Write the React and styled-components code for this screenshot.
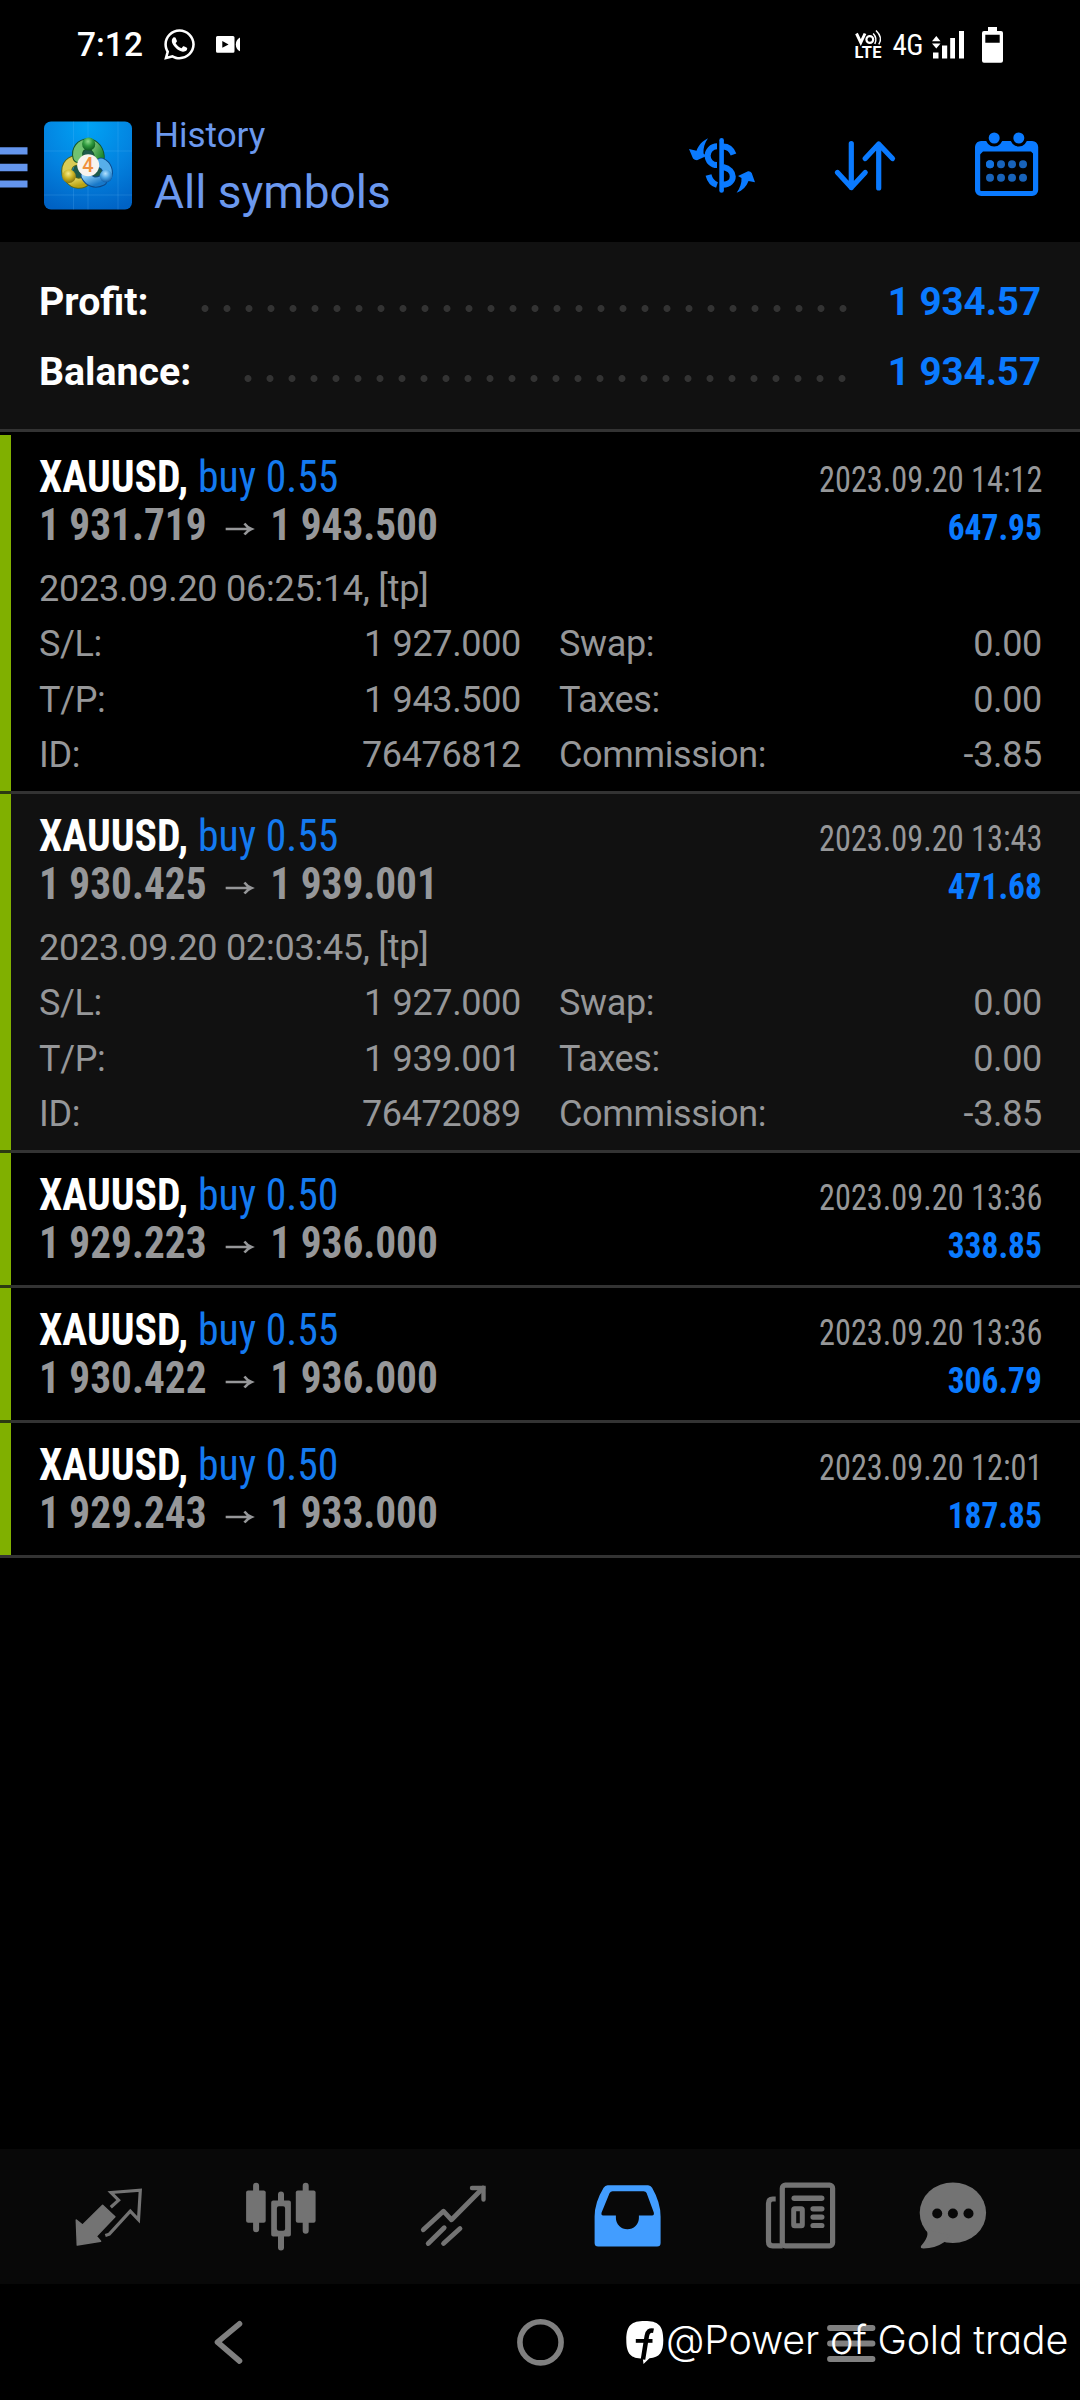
import React from "react";
import styled, { createGlobalStyle } from "styled-components";
import { FaWhatsapp } from "react-icons/fa";

const color = {
  blue: "#0a7aff",
  blueText: "#147af0",
  title: "#6b98ee",
  grey: "#969799",
  tab: "#737373",
  nav: "#808080",
  line: "#333333",
  green: "#80b000",
};

const GlobalStyle = createGlobalStyle`
  * { box-sizing: border-box; }
  body {
    margin: 0;
    background: #000;
    font-family: Roboto, "Liberation Sans", sans-serif;
  }
  svg { display: block; flex: none; overflow: visible; }
`;

const Screen = styled.div`
  display: flex;
  flex-direction: column;
  width: 1080px;
  height: 2400px;
  overflow: hidden;
  background: #000;
  white-space: nowrap;
`;

/* ---------- status bar ---------- */

const StatusBar = styled.header`
  display: flex;
  justify-content: space-between;
  align-items: center;
  height: 87px;
  padding: 2px 77px 0 77px;
  color: #fff;
`;

const StatusGroup = styled.div`
  display: flex;
  align-items: center;
  gap: ${(p) => p.$gap}px;
`;

const Clock = styled.span`
  font-size: 33.5px;
  font-weight: 500;
  line-height: 40px;
`;

const Network = styled.span`
  width: 28px;
  font-family: "Roboto Condensed", Roboto, sans-serif;
  font-size: 29px;
  font-weight: 400;
  line-height: 34px;
  letter-spacing: -0.600px;
`;

const WhatsAppMark = styled(FaWhatsapp)`
  width: 31px;
  height: 35px;
`;

const CameraIcon = () => (
  <svg viewBox="216 34 25 21" width="25" height="21">
    <path fill="#fff" fillRule="evenodd" d="M217.500 36H233Q234.500 36 234.500 37.500V51.200Q234.500 52.700 233 52.700H217.500Q216 52.700 216 51.200V37.500Q216 36 217.500 36ZM222.300 41V47.800L228.600 44.400Z" />
    <path fill="#fff" d="M240 37.600V51.300Q236 49.500 235.800 44.400Q236 39.500 240 37.600Z" />
  </svg>
);

const VolteText = styled.text`
  fill: #fff;
  font-family: Roboto, sans-serif;
  font-weight: 700;
`;

const VolteIcon = () => (
  <svg viewBox="855 29 26 29" width="26" height="29">
    <path d="M856.500 32.500L860.800 41.500L865 32.500" fill="none" stroke="#fff" strokeWidth="2.900" />
    <circle cx="869.800" cy="38.500" r="3.400" fill="none" stroke="#fff" strokeWidth="2.200" />
    <path d="M873.200 32.600Q877.600 37.500 874.800 43M876 29.500Q883.200 36.500 878.800 43.400" fill="none" stroke="#fff" strokeWidth="1.500" />
    <VolteText x="854.500" y="57.300" fontSize="16.400" textLength="27">LTE</VolteText>
  </svg>
);

const SignalIcon = () => (
  <svg viewBox="932 29 32 29" width="32" height="29">
    <path fill="#fff" d="M932 40.300L936.300 35L940.500 40.300ZM932 42.500L936.300 47.500L940.500 42.500ZM933 51.500H938.500V57.500H933ZM942 44.500H947.200V57.500H942ZM950.200 37H955V57.500H950.200ZM959 30H964V57.500H959Z" />
  </svg>
);

const BatteryIcon = () => (
  <svg viewBox="982 26 21 36" width="21" height="36">
    <path fill="#fff" fillRule="evenodd" d="M988 26H997V30H1001Q1003 30 1003 32V59.700Q1003 61.700 1001 61.700H984Q982 61.700 982 59.700V32Q982 30 984 30H988ZM985.300 33.700V41.700H999.700V33.700Z" />
  </svg>
);

/* ---------- app header ---------- */

const Header = styled.div`
  display: flex;
  align-items: center;
  height: 155px;
  padding-right: 42px;
`;

const MenuButton = styled.div`
  width: 44px;
`;

const Titles = styled.div`
  display: flex;
  flex-direction: column;
  flex: 1;
  margin: 8px 0 0 22px;
  color: ${color.title};
`;

const Section = styled.span`
  font-size: 35px;
  line-height: 46px;
`;

const Filter = styled.span`
  font-size: 46px;
  line-height: 66px;
`;

const Actions = styled.div`
  display: flex;
  align-items: center;
  gap: 81px;
`;

const MenuIcon = () => (
  <svg viewBox="0 140.500 28 48" width="28" height="48">
    <path fill="#6495ed" d="M0 146.700H27.500V154H0ZM0 163.300H27.500V170.700H0ZM0 180H27.500V187H0Z" />
  </svg>
);

const LogoText = styled.text`
  fill: #f0913c;
  font-family: Roboto, sans-serif;
  font-weight: 500;
`;

const AppLogo = () => (
  <svg viewBox="44 119.500 88 90" width="88" height="90">
    <defs>
      <radialGradient id="sky" cx="0.5" cy="0.05" r="1">
        <stop offset="0" stopColor="#00a3f5" />
        <stop offset="0.55" stopColor="#0382df" />
        <stop offset="1" stopColor="#0062c4" />
      </radialGradient>
      <linearGradient id="leaf" x1="0" y1="0" x2="1" y2="1">
        <stop offset="0" stopColor="#8fcf8a" />
        <stop offset="1" stopColor="#1d8a2e" />
      </linearGradient>
      <linearGradient id="gold" x1="0" y1="0" x2="1" y2="1">
        <stop offset="0" stopColor="#ecdf6a" />
        <stop offset="1" stopColor="#b9a213" />
      </linearGradient>
      <linearGradient id="ice" x1="0" y1="0" x2="1" y2="1">
        <stop offset="0" stopColor="#8fd0f7" />
        <stop offset="1" stopColor="#1878c9" />
      </linearGradient>
      <radialGradient id="ballGreen" cx="0.45" cy="0.3" r="0.7">
        <stop offset="0" stopColor="#8fdc8c" />
        <stop offset="0.5" stopColor="#2f9a3e" />
        <stop offset="1" stopColor="#0d5a1e" />
      </radialGradient>
      <radialGradient id="ballGold" cx="0.45" cy="0.3" r="0.7">
        <stop offset="0" stopColor="#f6ec8a" />
        <stop offset="0.5" stopColor="#cbb526" />
        <stop offset="1" stopColor="#83720b" />
      </radialGradient>
      <radialGradient id="ballBlue" cx="0.45" cy="0.3" r="0.7">
        <stop offset="0" stopColor="#b4e2ff" />
        <stop offset="0.5" stopColor="#4aa3e2" />
        <stop offset="1" stopColor="#0d5dab" />
      </radialGradient>
    </defs>
    <rect x="44" y="121" width="88" height="88" rx="7" fill="url(#sky)" />
    <path d="M73.500 121V209M88 121V209M118 121V209M44 150.500H132M44 194.500H132" stroke="#7cc9ff" strokeOpacity="0.18" strokeWidth="1" />
    <path d="M70 178L79 153L88 144L99 154L107 178L96 184L88 178L80 184Z" fill="#1d5a4a" />
    <g fill="none" strokeLinecap="round">
      <path d="M67 174C65.500 164 71 159.500 80 159.500" stroke="#56661a" strokeWidth="11" />
      <path d="M67 174C65.500 164 71 159.500 80 159.500" stroke="#d9cc55" strokeWidth="9" />
      <path d="M70 178C74 184 82 184.500 87 179" stroke="#56661a" strokeWidth="11" />
      <path d="M70 178C74 184 82 184.500 87 179" stroke="url(#gold)" strokeWidth="9" />
      <path d="M78 157C76 149 81 143.500 88 143.500" stroke="#14552a" strokeWidth="11" />
      <path d="M78 157C76 149 81 143.500 88 143.500" stroke="#71c270" strokeWidth="9" />
      <path d="M90 143.500C97 146 101 153 98.500 162" stroke="#14552a" strokeWidth="11" />
      <path d="M90 143.500C97 146 101 153 98.500 162" stroke="url(#leaf)" strokeWidth="9" />
      <path d="M101 162.500C107 165 108.500 171 106.500 176" stroke="#0c4a8c" strokeWidth="11" />
      <path d="M101 162.500C107 165 108.500 171 106.500 176" stroke="#57aeea" strokeWidth="9" />
      <path d="M86 175C89 181 95 183.500 102 180" stroke="#0c4a8c" strokeWidth="11" />
      <path d="M86 175C89 181 95 183.500 102 180" stroke="url(#ice)" strokeWidth="9" />
    </g>
    <circle cx="88.700" cy="143.500" r="6.600" fill="url(#ballGreen)" />
    <circle cx="69" cy="175.800" r="6.800" fill="url(#ballGold)" />
    <circle cx="106" cy="175.600" r="6.300" fill="url(#ballBlue)" />
    <circle cx="88.200" cy="164.800" r="11" fill="#f7f3ee" />
    <LogoText x="82.300" y="171.800" fontSize="20">4</LogoText>
  </svg>
);

const DepositIcon = () => (
  <svg viewBox="689 134.500 66 60" width="66" height="60">
    <g fill="none" stroke={color.blue}>
      <path d="M721.600 139.700V190" strokeWidth="4.600" strokeLinecap="round" />
      <path d="M717 145.800A9 9 0 0 0 717 164.500M723 146Q730.500 146 733.500 154" strokeWidth="6" />
      <path d="M723 166.500C736 169 736 183.500 723 184.300M717 184.500Q710.500 182.500 708.500 174.500" strokeWidth="6" />
    </g>
    <path fill={color.blue} d="M708 137.700C704.500 142.500 703.200 147.500 703.500 153L706.500 155.500L697 159.800Q694.500 159.800 693 158L689 148.600L696.500 150.200C698.500 145 702 140.500 708 137.700Z" />
    <path fill={color.blue} d="M736.600 192.300C740 187.500 741.800 182.500 741.500 177.500L738 175.500L748 170.800Q750.500 170.500 751.700 172.500L755 181.800L748.500 180.500C746.500 185.500 743 190 736.600 192.300Z" />
  </svg>
);

const SortIcon = () => (
  <svg viewBox="836 138.500 58 52" width="58" height="52">
    <path fill="none" stroke={color.blue} strokeWidth="5.200" strokeLinecap="round" strokeLinejoin="round" d="M851.300 143V187M837.500 172L851.300 187L865.200 172M878.700 187.500V143.500M865.200 158L878.700 143.500L892.500 158" />
  </svg>
);

const CalendarIcon = () => (
  <svg viewBox="975 131.500 63 66" width="63" height="66">
    <rect x="977.600" y="143" width="58" height="50" rx="3.500" fill="none" stroke={color.blue} strokeWidth="5.200" />
    <path fill={color.blue} d="M977 142H1036V156L1031 151H983L978 156Z" />
    <circle cx="994.200" cy="137.500" r="8.600" fill="#000" />
    <circle cx="1018.800" cy="137.500" r="8.600" fill="#000" />
    <circle cx="994.200" cy="137.500" r="5.500" fill={color.blue} />
    <circle cx="1018.800" cy="137.500" r="5.500" fill={color.blue} />
    <g fill="#1863ba">
      {[990, 1001, 1012, 1023].map((cx) =>
        [163.7, 177.3].map((cy) => <circle key={`${cx}-${cy}`} cx={cx} cy={cy} r="4" />)
      )}
    </g>
    <circle cx="990" cy="163.700" r="4" fill="#1272e0" />
  </svg>
);

/* ---------- summary ---------- */

const Summary = styled.section`
  height: 190px;
  padding: 25px 39px 0;
  background: #111;
  border-bottom: 3px solid ${color.line};
`;

const SummaryRow = styled.div`
  display: flex;
  height: 70px;
  font-size: 38.500px;
  font-weight: 700;
  line-height: 70px;
`;

const SummaryLabel = styled.span`
  color: #fff;
  font-size: 39.300px;
`;

const Leader = styled.span`
  flex: 1;
  margin: 0 32px 0 45.500px;
  background: radial-gradient(circle at 11px 41.500px, #333 3px, transparent 3.900px) 0 0 / 22px 70px repeat-x;
`;

const SummaryValue = styled.span`
  color: ${color.blue};
`;

/* ---------- deals ---------- */

const DealList = styled.main`
  flex: 1;
  padding-top: 3px;
`;

const Deal = styled.article`
  display: flex;
  height: ${(p) => (p.$open ? 359 : 135)}px;
  background: linear-gradient(${color.line}, ${color.line}) bottom / 100% 3px no-repeat ${(p) => (p.$shaded ? "#111" : "#000")};
`;

const DealMark = styled.div`
  width: 11px;
  background: ${color.green};
  border-bottom: 3px solid ${(p) => (p.$last ? color.line : "#2c3b12")};
`;

const DealBody = styled.div`
  flex: 1;
  padding: 18px 38px 0 28px;
`;

const DealLine = styled.div`
  display: flex;
  justify-content: space-between;
  height: 48px;
  font-family: "Roboto Condensed", Roboto, sans-serif;
  line-height: 48px;
`;

const Symbol = styled.span`
  color: #fff;
  font-size: 44px;
  font-weight: 700;
  transform: scaleX(0.948);
  transform-origin: left;
`;

const Volume = styled.span`
  color: ${color.blueText};
  font-weight: 400;
`;

const DealDate = styled.span`
  color: ${color.grey};
  font-size: 36.500px;
  line-height: 54px;
  transform: scaleX(0.885);
  transform-origin: right;
`;

const Prices = styled.span`
  display: flex;
  color: ${color.grey};
  font-size: 44px;
  font-weight: 700;
  transform: scaleX(0.938);
  transform-origin: left;
`;

const ArrowIcon = styled.svg`
  margin: 20px 19px 0 20px;
`;

const DealProfit = styled.span`
  color: ${color.blue};
  font-size: 36.500px;
  font-weight: 700;
  line-height: 54px;
  transform: scaleX(0.915);
  transform-origin: right;
`;

const OpenInfo = styled.div`
  margin-top: 12px;
  color: ${color.grey};
  font-size: 36px;
  letter-spacing: -0.250px;
  line-height: 56px;
`;

const Details = styled.dl`
  display: grid;
  grid-template-columns: 482px 1fr;
  column-gap: 38px;
  grid-auto-rows: 55.500px;
  margin: 0;
  color: ${color.grey};
  font-size: 36px;
  letter-spacing: -0.350px;
  line-height: 55.500px;
`;

const Detail = styled.div`
  display: flex;
  justify-content: space-between;
`;

const DetailLabel = styled.dt``;

const DetailValue = styled.dd`
  margin: 0;
`;

const deals = [
  {
    volume: "0.55", from: "1 931.719", to: "1 943.500", date: "2023.09.20 14:12", profit: "647.95",
    info: "2023.09.20 06:25:14, [tp]",
    details: [["S/L:", "1 927.000"], ["Swap:", "0.00"], ["T/P:", "1 943.500"], ["Taxes:", "0.00"], ["ID:", "76476812"], ["Commission:", "-3.85"]],
  },
  {
    volume: "0.55", from: "1 930.425", to: "1 939.001", date: "2023.09.20 13:43", profit: "471.68", shaded: true,
    info: "2023.09.20 02:03:45, [tp]",
    details: [["S/L:", "1 927.000"], ["Swap:", "0.00"], ["T/P:", "1 939.001"], ["Taxes:", "0.00"], ["ID:", "76472089"], ["Commission:", "-3.85"]],
  },
  { volume: "0.50", from: "1 929.223", to: "1 936.000", date: "2023.09.20 13:36", profit: "338.85" },
  { volume: "0.55", from: "1 930.422", to: "1 936.000", date: "2023.09.20 13:36", profit: "306.79" },
  { volume: "0.50", from: "1 929.243", to: "1 933.000", date: "2023.09.20 12:01", profit: "187.85" },
];

const DealRow = ({ deal, last }) => (
  <Deal $open={!!deal.details} $shaded={deal.shaded}>
    <DealMark $last={last} />
    <DealBody>
      <DealLine>
        <Symbol>XAUUSD, <Volume>buy {deal.volume}</Volume></Symbol>
        <DealDate>{deal.date}</DealDate>
      </DealLine>
      <DealLine>
        <Prices>
          {deal.from}
          <ArrowIcon viewBox="0 0 29 16" width="29" height="16">
            <path d="M0 8H25M20 2.500Q22.500 6 27.500 8Q22.500 10 20 13.500" fill="none" stroke={color.grey} strokeWidth="2.700" />
          </ArrowIcon>
          {deal.to}
        </Prices>
        <DealProfit>{deal.profit}</DealProfit>
      </DealLine>
      {deal.details && (
        <>
          <OpenInfo>{deal.info}</OpenInfo>
          <Details>
            {deal.details.map(([label, value]) => (
              <Detail key={label}>
                <DetailLabel>{label}</DetailLabel>
                <DetailValue>{value}</DetailValue>
              </Detail>
            ))}
          </Details>
        </>
      )}
    </DealBody>
  </Deal>
);

/* ---------- tab bar ---------- */

const TabBar = styled.nav`
  display: grid;
  grid-template-columns: repeat(5, 173.400px) 1fr;
  place-items: center;
  height: 135px;
  padding: 0 62px 0 21px;
  background: #080808;
`;

const TabIcon = ({ cx, children }) => (
  <svg viewBox={`${cx - 40} 2176.500 80 80`} width="80" height="80">{children}</svg>
);

const QuotesIcon = () => (
  <TabIcon cx={107.7}>
    <path fill={color.tab} stroke={color.tab} strokeWidth="1.500" strokeLinejoin="round" d="M76 2219.500L82.300 2224.500L102.300 2204.800L114.600 2216.300L96 2235.700L100.300 2240.800L77 2244.600Z" />
    <path fill="none" stroke={color.tab} strokeWidth="3.200" d="M110.500 2206.800L118.300 2199.700L110.700 2192L140 2189.700L138.200 2219.300L130 2210.700L109 2233.700L105 2235" />
  </TabIcon>
);

const ChartIcon = () => (
  <TabIcon cx={281.1}>
    <path stroke={color.tab} strokeWidth="6" strokeLinecap="round" d="M256.200 2185.300V2228.700M305.800 2185.300V2230.300M281.100 2194V2201M281.100 2236V2247" />
    <rect x="246.200" y="2190" width="19.600" height="32.300" rx="2" fill={color.tab} />
    <rect x="295.900" y="2190" width="19.800" height="32.300" rx="2" fill={color.tab} />
    <path fill={color.tab} fillRule="evenodd" d="M273.300 2200H289Q291 2200 291 2202V2234Q291 2236 289 2236H273.300Q271.300 2236 271.300 2234V2202Q271.300 2200 273.300 2200ZM279 2205.700Q277 2205.700 277 2207.700V2228.300Q277 2230.300 279 2230.300H283.200Q285.200 2230.300 285.200 2228.300V2207.700Q285.200 2205.700 283.200 2205.700Z" />
  </TabIcon>
);

const TradeIcon = () => (
  <TabIcon cx={454.5}>
    <g fill="none" stroke={color.tab} strokeWidth="4.800" strokeLinecap="round">
      <path d="M423.800 2229.300L443.900 2210.700L452 2219.300L483.500 2187.500" strokeLinejoin="round" />
      <path d="M472.500 2187.500H484V2199" strokeWidth="4.400" />
      <path d="M428.700 2243L444.700 2227.300M444 2243L460.500 2228" />
    </g>
  </TabIcon>
);

const HistoryIcon = () => (
  <TabIcon cx={627.9}>
    <path fill="#429dff" fillRule="evenodd" d="M607.500 2184.700H648Q650.500 2184.700 652 2187.200Q660.500 2202 660.500 2216V2242.500Q660.500 2246 657 2246H598Q594.500 2246 594.500 2242.500V2216Q594.500 2202 603.500 2187.200Q605 2184.700 607.500 2184.700ZM612.500 2190.700Q610.500 2190.700 609.500 2192.500L601.500 2212Q600.800 2215 603 2215H615.800V2217.500A11.500 11.200 0 0 0 638.800 2217.500V2215H652Q654.300 2215 653.700 2212L646.500 2192.500Q645.700 2190.700 643.500 2190.700Z" />
  </TabIcon>
);

const NewsIcon = () => (
  <TabIcon cx={801.3}>
    <g fill="none" stroke={color.tab} strokeWidth="5.200">
      <rect x="782.600" y="2184.700" width="50.300" height="60.600" rx="3" />
      <path d="M776 2198.500H773Q768.800 2198.500 768.800 2203V2241Q768.800 2245.300 773 2245.300H783" />
      <path d="M794.500 2197.700H822" strokeLinecap="round" strokeWidth="5.400" />
      <rect x="794" y="2208.300" width="8.600" height="17" rx="1" strokeWidth="5" />
      <path d="M813.300 2208.300H822.200M813.300 2216.600H822.200M813.300 2225H822.200" strokeLinecap="round" />
    </g>
  </TabIcon>
);

const ChatIcon = () => (
  <TabIcon cx={953}>
    <ellipse cx="952.900" cy="2212.300" rx="33.200" ry="30.300" fill={color.tab} />
    <path fill={color.tab} d="M926 2229Q930.500 2234.500 921 2245.500Q920 2248 923.500 2248Q935 2248 944.500 2241.500L950 2235Z" />
    <g fill="#080808">
      <circle cx="937.200" cy="2213" r="5" />
      <circle cx="952.900" cy="2213" r="5" />
      <circle cx="968.500" cy="2213" r="5" />
    </g>
  </TabIcon>
);

/* ---------- system navigation ---------- */

const SystemNav = styled.footer`
  position: relative;
  display: grid;
  grid-template-columns: repeat(3, 311px);
  place-items: center;
  height: 116px;
  padding-left: 73px;
`;

const BackIcon = () => (
  <svg viewBox="212 2318 31 48" width="31" height="48">
    <path d="M238.500 2323.800L216.500 2342.200L238.500 2361" fill="none" stroke={color.nav} strokeWidth="5.600" strokeLinecap="round" strokeLinejoin="round" />
  </svg>
);

const HomeIcon = () => (
  <svg viewBox="516 2318 48 48" width="48" height="48">
    <circle cx="540.500" cy="2342.300" r="20.600" fill="none" stroke={color.nav} strokeWidth="5.600" />
  </svg>
);

const RecentsIcon = () => (
  <svg viewBox="826 2318 48 48" width="48" height="48">
    <path d="M829 2328H871.500M829 2343.500H871.500M829 2359H871.500" stroke={color.nav} strokeWidth="5.800" strokeLinecap="round" />
  </svg>
);

const Watermark = styled.div`
  position: absolute;
  top: 26px;
  left: 626px;
  display: flex;
  gap: 3px;
  color: #fff;
  font-family: Inter, Roboto, sans-serif;
  font-size: 39.500px;
  font-weight: 350;
  font-feature-settings: "cv11";
  letter-spacing: -0.200px;
  line-height: 60px;
`;

const WatermarkIcon = () => (
  <svg viewBox="626 2310 37 60" width="37" height="60">
    <path fill="#fff" d="M644.800 2321C658 2321 663.300 2325 663.300 2340C663.300 2352.500 659.500 2357.500 649.500 2358.300L643.500 2364L642.800 2358.600C631 2358.600 626.300 2354 626.300 2340C626.300 2325 631.600 2321 644.800 2321Z" />
    <path d="M653.500 2330.700Q647.800 2329.500 646.800 2336L643 2359.500" fill="none" stroke="#000" strokeWidth="4.600" />
    <path d="M635.800 2340.900H652.500" fill="none" stroke="#000" strokeWidth="3.800" />
  </svg>
);

export default function App() {
  return (
    <Screen>
      <GlobalStyle />
      <StatusBar>
        <StatusGroup $gap={21}>
          <Clock>7:12</Clock>
          <WhatsAppMark />
          <CameraIcon />
        </StatusGroup>
        <StatusGroup $gap={18}>
          <StatusGroup $gap={11.5}>
            <VolteIcon />
            <Network>4G</Network>
            <SignalIcon />
          </StatusGroup>
          <BatteryIcon />
        </StatusGroup>
      </StatusBar>
      <Header>
        <MenuButton><MenuIcon /></MenuButton>
        <AppLogo />
        <Titles>
          <Section>History</Section>
          <Filter>All symbols</Filter>
        </Titles>
        <Actions>
          <DepositIcon />
          <SortIcon />
          <CalendarIcon />
        </Actions>
      </Header>
      <Summary>
        {["Profit:", "Balance:"].map((label) => (
          <SummaryRow key={label}>
            <SummaryLabel>{label}</SummaryLabel>
            <Leader />
            <SummaryValue>1 934.57</SummaryValue>
          </SummaryRow>
        ))}
      </Summary>
      <DealList>
        {deals.map((deal, i) => (
          <DealRow key={deal.from} deal={deal} last={i === deals.length - 1} />
        ))}
      </DealList>
      <TabBar>
        <QuotesIcon />
        <ChartIcon />
        <TradeIcon />
        <HistoryIcon />
        <NewsIcon />
        <ChatIcon />
      </TabBar>
      <SystemNav>
        <BackIcon />
        <HomeIcon />
        <RecentsIcon />
        <Watermark>
          <WatermarkIcon />
          <span>@Power of Gold trade</span>
        </Watermark>
      </SystemNav>
    </Screen>
  );
}
